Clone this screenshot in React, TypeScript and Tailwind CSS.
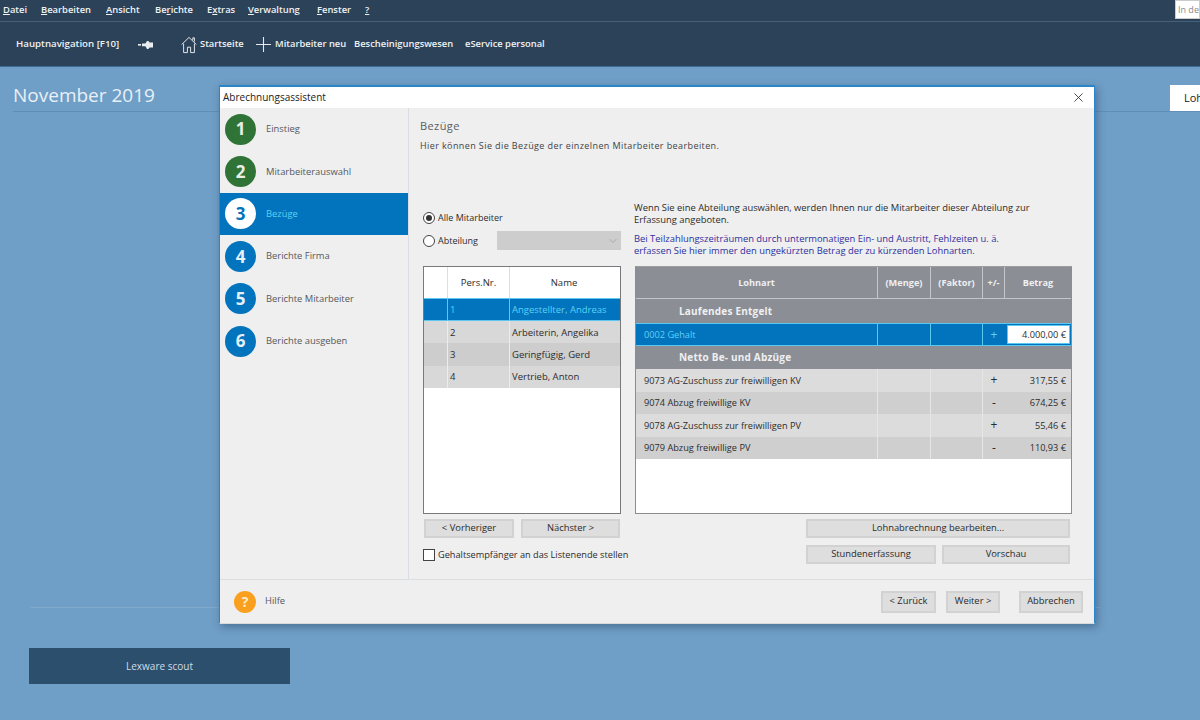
import { X, ChevronDown } from 'lucide-react'

const MENU = [
  { pre: '', key: 'D', post: 'atei', w: 'w-[38px]' },
  { pre: '', key: 'B', post: 'earbeiten', w: 'w-[65px]' },
  { pre: '', key: 'A', post: 'nsicht', w: 'w-[49px]' },
  { pre: 'Be', key: 'r', post: 'ichte', w: 'w-[52px]' },
  { pre: 'E', key: 'x', post: 'tras', w: 'w-[41px]' },
  { pre: '', key: 'V', post: 'erwaltung', w: 'w-[69px]' },
  { pre: '', key: 'F', post: 'enster', w: 'w-[48px]' },
  { pre: '', key: '?', post: '', w: 'w-[12px]' },
]

const STEPS = [
  { n: 1, label: 'Einstieg', state: 'done' },
  { n: 2, label: 'Mitarbeiterauswahl', state: 'done' },
  { n: 3, label: 'Bezüge', state: 'active' },
  { n: 4, label: 'Berichte Firma', state: 'todo' },
  { n: 5, label: 'Berichte Mitarbeiter', state: 'todo' },
  { n: 6, label: 'Berichte ausgeben', state: 'todo' },
]

const PEOPLE = [
  { nr: '2', name: 'Arbeiterin, Angelika', bg: 'bg-[#d8d8d8]' },
  { nr: '3', name: 'Geringfügig, Gerd', bg: 'bg-[#cdcdcd]' },
  { nr: '4', name: 'Vertrieb, Anton', bg: 'bg-[#d8d8d8]' },
]

const WAGES = [
  { name: '9073 AG-Zuschuss zur freiwilligen KV', sign: '+', amount: '317,55 €', bg: 'bg-[#dcdcdc]' },
  { name: '9074 Abzug freiwillige KV', sign: '-', amount: '674,25 €', bg: 'bg-[#cfcfcf]' },
  { name: '9078 AG-Zuschuss zur freiwilligen PV', sign: '+', amount: '55,46 €', bg: 'bg-[#dcdcdc]' },
  { name: '9079 Abzug freiwillige PV', sign: '-', amount: '110,93 €', bg: 'bg-[#cfcfcf]' },
]

function HouseIcon() {
  return (
    <svg width="16" height="18" viewBox="0 0 16 18" fill="none" stroke="#dfe6ec" strokeWidth="1">
      <path d="M0.6 8.6 8 1.4l7.4 7.2" />
      <path d="M2.6 7.6v9h3.8v-5.4h3.2v5.4h3.8v-9" />
      <path d="M11.8 4.2V1.8h1.6v3.8" />
    </svg>
  )
}

function PlusIcon() {
  return (
    <svg width="15" height="15" viewBox="0 0 15 15" stroke="#e4e9ee" strokeWidth="1.1">
      <path d="M7.5 0v15M0 7.5h15" />
    </svg>
  )
}

function PinIcon() {
  return (
    <svg width="15" height="8" viewBox="0 0 15 8" fill="#e8edf1">
      <rect x="0" y="3" width="3" height="1.6" />
      <path d="M4 2.6h3.4L9 0h1.4l1.2 1.4H15v5h-3.4L10.4 8H9L7.4 5.2H4z" />
    </svg>
  )
}

function Button({ label, className }: { label: string; className: string }) {
  return (
    <button className={`flex items-center justify-center bg-[#dedede] border-2 border-[#d2d2d2] text-[9.4px] text-[#2b2b2b] ${className}`}>
      {label}
    </button>
  )
}

function Sidebar() {
  return (
    <div className="w-[189px] shrink-0 border-r border-[#d9dde1] flex flex-col">
      {STEPS.map((s) => (
        <div
          key={s.n}
          className={`h-[42.4px] pl-[5px] flex items-center gap-[10px] ${s.state === 'active' ? 'bg-[#0273bd]' : ''}`}
        >
          <div
            className={`w-[31px] h-[31px] rounded-full flex items-center justify-center text-[17px] font-bold ${
              s.state === 'done'
                ? 'bg-[#2f7336] text-[#e9efe6]'
                : s.state === 'active'
                  ? 'bg-white text-[#0273bd]'
                  : 'bg-[#0273bd] text-[#e6f0f8]'
            }`}
          >
            {s.n}
          </div>
          <span className={`text-[9.4px] ${s.state === 'active' ? 'text-[#5cd2f5]' : 'text-[#55595e]'}`}>
            {s.label}
          </span>
        </div>
      ))}
    </div>
  )
}

function PersonList() {
  return (
    <div className="h-[248px] border-[1.5px] border-[#77797c] bg-white text-[9.5px] text-[#2c2c2c]">
      <div className="h-[31px] flex items-center">
        <div className="w-[24px] h-full border-r border-[#dedede]" />
        <div className="w-[62px] h-full pt-px border-r border-[#dedede] flex items-center justify-center">Pers.Nr.</div>
        <div className="flex-1 pt-px text-center pr-[2px]">Name</div>
      </div>
      <div className="h-[23px] flex items-center bg-[#0273bd] text-[#5cd2f5] border-y border-[#5cc8f0]">
        <div className="w-[24px] h-full border-r border-[#5cc8f0]" />
        <div className="w-[62px] h-full pt-px border-r border-[#5cc8f0] pl-[2px] flex items-center">1</div>
        <div className="flex-1 pt-px pl-[2px]">Angestellter, Andreas</div>
      </div>
      {PEOPLE.map((p) => (
        <div key={p.nr} className={`h-[22.3px] flex items-center ${p.bg}`}>
          <div className="w-[24px] h-full border-r border-[#ececec]" />
          <div className="w-[62px] h-full pt-px border-r border-[#ececec] pl-[2px] flex items-center">{p.nr}</div>
          <div className="flex-1 pt-px pl-[2px]">{p.name}</div>
        </div>
      ))}
    </div>
  )
}

function WageTable() {
  const head = 'h-full flex items-center justify-center border-r border-[#c4c6ca]'
  return (
    <div className="h-[248px] border-[1.5px] border-[#8b8d90] border-t-[#9b9da0] bg-white text-[9.2px] text-[#2c2c2c]">
      <div className="h-[32px] flex items-center bg-[#8b8e95] text-[#eef0f2] font-bold border-b border-[#c4c6ca]">
        <div className={`${head} w-[242px]`}>Lohnart</div>
        <div className={`${head} w-[53px]`}>(Menge)</div>
        <div className={`${head} w-[52px]`}>(Faktor)</div>
        <div className={`${head} w-[22px]`}>+/-</div>
        <div className="flex-1 text-center">Betrag</div>
      </div>
      <div className="h-[24px] flex items-center bg-[#8b8e95] text-[#eef0f2] font-bold text-[10px] pl-[43px] tracking-[0.2px]">
        Laufendes Entgelt
      </div>
      <div className="h-[23px] flex items-center bg-[#0273bd] text-[#5cd2f5] border-y border-[#5cc8f0]">
        <div className="w-[242px] h-full border-r border-[#5cc8f0] pl-[8px] flex items-center">0002 Gehalt</div>
        <div className="w-[53px] h-full border-r border-[#5cc8f0]" />
        <div className="w-[52px] h-full border-r border-[#5cc8f0]" />
        <div className="w-[22px] h-full flex items-center justify-center text-[12px]">+</div>
        <div className="flex-1 h-[19px] ml-[2px] mr-px bg-white border border-[#5cc8f0] text-[#2c2c2c] text-right pr-[3px] leading-[17px]">
          4.000,00 €
        </div>
      </div>
      <div className="h-[23px] flex items-center bg-[#8b8e95] text-[#eef0f2] font-bold text-[10px] pl-[43px] tracking-[0.2px]">
        Netto Be- und Abzüge
      </div>
      {WAGES.map((w) => (
        <div key={w.name} className={`h-[22.5px] flex items-center ${w.bg}`}>
          <div className="w-[242px] h-full pt-px border-r border-[#e6e6e6] pl-[8px] flex items-center">{w.name}</div>
          <div className="w-[53px] h-full border-r border-[#e6e6e6]" />
          <div className="w-[52px] h-full border-r border-[#e6e6e6]" />
          <div className="w-[22px] h-full flex items-center justify-center text-[12px]">{w.sign}</div>
          <div className="flex-1 pt-px text-right pr-[5px]">{w.amount}</div>
        </div>
      ))}
    </div>
  )
}

function Wizard() {
  return (
    <div className="absolute left-[219px] top-[85px] w-[876px] h-[539px] flex flex-col bg-[#efefef] border-t-2 border-x border-b border-[#2a86c8] border-b-[#d7dadd] border-r-[#2a86c8] shadow-[2px_3px_8px_rgba(30,60,90,0.45)] [font-family:'Open_Sans','Noto_Sans',sans-serif]">
      <div className="h-[21px] shrink-0 bg-white flex items-center justify-between pl-[3px] pr-[8px] text-[10px] text-[#222]">
        <span>Abrechnungsassistent</span>
        <X size={15} strokeWidth={1.4} className="text-[#333]" />
      </div>

      <div className="flex-1 min-h-0 flex border-b border-[#dcdfe2]">
        <Sidebar />
        <div className="flex-1 pl-[11px] pt-[10px] flex flex-col">
          <h2 className="text-[11px] leading-[15px] text-[#5a5e63] tracking-[0.4px]">Bezüge</h2>
          <p className="mt-[6px] text-[9px] leading-[13px] text-[#3e4246] tracking-[0.4px]">
            Hier können Sie die Bezüge der einzelnen Mitarbeiter bearbeiten.
          </p>

          <div className="mt-[41px] flex gap-[14px]">
            <div className="w-[198px] ml-[3px] shrink-0 flex flex-col">
              <div className="h-[73px] pt-[18px] flex flex-col text-[9px] text-[#2c2c2c]">
                <label className="h-[13px] flex items-center gap-[3px]">
                  <span className="w-[12px] h-[12px] rounded-full border border-[#444] bg-white flex items-center justify-center">
                    <span className="w-[6px] h-[6px] rounded-full bg-[#333]" />
                  </span>
                  Alle Mitarbeiter
                </label>
                <div className="mt-[7px] flex items-center">
                  <label className="w-[74px] flex items-center gap-[3px]">
                    <span className="w-[12px] h-[12px] rounded-full border border-[#444] bg-white" />
                    Abteilung
                  </label>
                  <div className="w-[124px] h-[19px] bg-[#cdcdcd] flex items-center justify-end pr-[2px]">
                    <ChevronDown size={12} className="text-[#aaa]" />
                  </div>
                </div>
              </div>
              <PersonList />
              <div className="mt-[5px] flex gap-[7px] pl-px">
                <Button label="< Vorheriger" className="w-[90px] h-[19px]" />
                <Button label="Nächster >" className="w-[99px] h-[19px]" />
              </div>
              <label className="mt-[10px] flex items-center gap-[3px] text-[9.2px] text-[#2c2c2c] whitespace-nowrap">
                <span className="w-[12px] h-[12px] border border-[#444] bg-white shrink-0" />
                Gehaltsempfänger an das Listenende stellen
              </label>
            </div>

            <div className="w-[437px] shrink-0 flex flex-col">
              <div className="h-[73px] pt-[9px] text-[9.4px] leading-[12px] whitespace-nowrap">
                <p className="text-[#2c2c2c] -ml-[1px]">
                  Wenn Sie eine Abteilung auswählen, werden Ihnen nur die Mitarbeiter dieser Abteilung zur
                  <br />
                  Erfassung angeboten.
                </p>
                <p className="mt-[7px] -ml-[1px] text-[#2d2fa0]">
                  Bei Teilzahlungszeiträumen durch untermonatigen Ein- und Austritt, Fehlzeiten u. ä.
                  <br />
                  erfassen Sie hier immer den ungekürzten Betrag der zu kürzenden Lohnarten.
                </p>
              </div>
              <WageTable />
              <div className="mt-[5px] flex flex-col items-end gap-[7px] pr-[2px]">
                <Button label="Lohnabrechnung bearbeiten..." className="w-[264px] h-[19px]" />
                <div className="flex gap-[6px]">
                  <Button label="Stundenerfassung" className="w-[130px] h-[19px]" />
                  <Button label="Vorschau" className="w-[128px] h-[19px]" />
                </div>
              </div>
            </div>
          </div>
        </div>
      </div>

      <div className="h-[43px] shrink-0 flex items-center pl-[14px] pr-[11px]">
        <div className="w-[22px] h-[22px] rounded-full bg-[#f9a01f] text-[#fde9c8] text-[14px] font-bold flex items-center justify-center">
          ?
        </div>
        <span className="ml-[9px] text-[9.4px] text-[#55595e]">Hilfe</span>
        <div className="ml-auto flex items-center">
          <Button label="< Zurück" className="w-[55px] h-[22px]" />
          <Button label="Weiter >" className="w-[54px] h-[22px] ml-[10px]" />
          <Button label="Abbrechen" className="w-[64px] h-[22px] ml-[19px]" />
        </div>
      </div>
    </div>
  )
}

export default function App() {
  return (
    <div className="relative w-[1200px] h-[720px] overflow-hidden flex flex-col bg-[#6f9ec6] text-white [font-family:'Open_Sans','Noto_Sans',sans-serif]">
      <header className="h-[67px] shrink-0 bg-[#2c4258] border-b border-[#3f6c94] flex flex-col">
        <div className="h-[22px] shrink-0 flex items-center pl-[3px] border-b border-[#46607a] text-[9.4px] font-semibold text-[#eef2f5]">
          {MENU.map((m) => (
            <span key={m.post + m.key} className={m.w}>
              {m.pre}
              <span className="underline">{m.key}</span>
              {m.post}
            </span>
          ))}
          <div className="ml-auto w-[25px] h-[19px] mb-[2px] bg-white border border-[#ccc] pl-[2px] text-[9px] font-normal text-[#8b8b8b] leading-[17px] overflow-hidden">
            In de
          </div>
        </div>
        <div className="flex-1 flex items-center pt-px pl-[16px] text-[9.4px] font-semibold text-[#eef2f5] whitespace-nowrap">
          <span className="w-[122px] text-[9.7px]">Hauptnavigation [F10]</span>
          <span className="w-[43px]"><PinIcon /></span>
          <HouseIcon />
          <span className="ml-[3px] w-[56px]">Startseite</span>
          <PlusIcon />
          <span className="ml-[4px] w-[79px]">Mitarbeiter neu</span>
          <span className="w-[111px]">Bescheinigungswesen</span>
          <span>eService personal</span>
        </div>
      </header>

      <main className="flex-1 flex flex-col pl-[13px]">
        <div className="h-[45px] flex items-start justify-between border-b border-[#5f8fb8]">
          <h1 className="text-[19px] text-[#e8f0f6] mt-[14px] leading-[28px]">November 2019</h1>
          <div className="w-[30px] h-[26px] mt-[18px] bg-white text-[#222] text-[11px] pl-[14px] leading-[26px] overflow-hidden whitespace-nowrap">
            Loh
          </div>
        </div>
        <div className="mt-[495px] ml-[18px] mr-[100px] border-t border-[#80a9cc]" />
        <button className="mt-[40px] ml-[16px] w-[261px] h-[36px] bg-[#2d4f6e] text-[#cfdbe5] text-[10px]">
          Lexware scout
        </button>
      </main>

      <Wizard />
    </div>
  )
}
